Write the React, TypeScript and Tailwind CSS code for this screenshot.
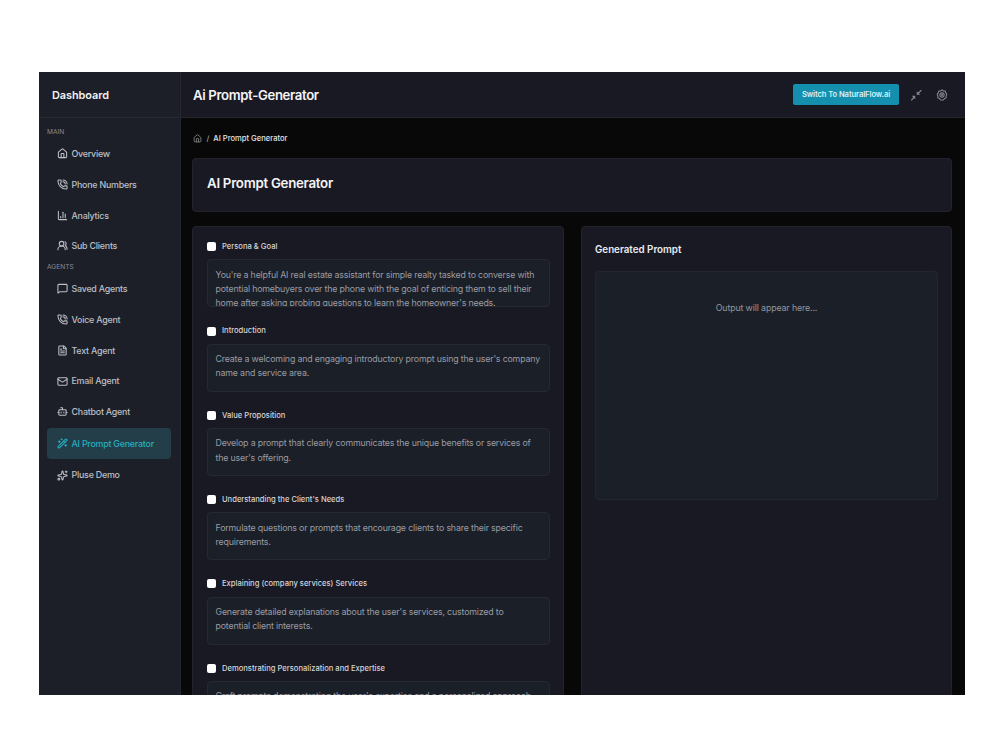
import React, { useState } from "react";
import {
  Bot,
  ChartColumn,
  FileText,
  House,
  Mail,
  MessageSquare,
  PhoneCall,
  Sparkles,
  UsersRound,
  WandSparkles,
} from "lucide-react";

const mainLinks = [
  { name: "Overview", icon: House },
  { name: "Phone Numbers", icon: PhoneCall },
  { name: "Analytics", icon: ChartColumn },
  { name: "Sub Clients", icon: UsersRound },
];

const agentLinks = [
  { name: "Saved Agents", icon: MessageSquare },
  { name: "Voice Agent", icon: PhoneCall },
  { name: "Text Agent", icon: FileText },
  { name: "Email Agent", icon: Mail },
  { name: "Chatbot Agent", icon: Bot },
  { name: "AI Prompt Generator", icon: WandSparkles },
  { name: "Pluse Demo", icon: Sparkles },
];

const sections = [
  {
    title: "Persona & Goal",
    lines: [
      "You're a helpful AI real estate assistant for simple realty tasked to converse with",
      "potential homebuyers over the phone with the goal of enticing them to sell their",
      "home after asking probing questions to learn the homeowner's needs.",
    ],
  },
  {
    title: "Introduction",
    lines: [
      "Create a welcoming and engaging introductory prompt using the user's company",
      "name and service area.",
    ],
  },
  {
    title: "Value Proposition",
    lines: [
      "Develop a prompt that clearly communicates the unique benefits or services of",
      "the user's offering.",
    ],
  },
  {
    title: "Understanding the Client's Needs",
    lines: [
      "Formulate questions or prompts that encourage clients to share their specific",
      "requirements.",
    ],
  },
  {
    title: "Explaining (company services) Services",
    lines: [
      "Generate detailed explanations about the user's services, customized to",
      "potential client interests.",
    ],
  },
  {
    title: "Demonstrating Personalization and Expertise",
    lines: ["Craft prompts demonstrating the user's expertise and a personalized approach"],
  },
];

function NavLink({ item, active, onClick }: any) {
  const Icon = item.icon;
  return (
    <button
      onClick={onClick}
      className={
        active
          ? "my-px flex h-[30.4px] w-full items-center gap-1 rounded bg-[#233d49] pl-[9.5px] text-[#25afc0]"
          : "flex h-[30.8px] w-full items-center gap-1 rounded pl-[9.5px] text-[#bcbfc5]"
      }
    >
      <Icon size={11} strokeWidth={2.3} />
      <span className="text-[8.9px] font-medium tracking-[-0.23px] whitespace-nowrap">
        {item.name}
      </span>
    </button>
  );
}

function CollapseIcon() {
  return (
    <svg viewBox="0 0 24 24" className="ml-[11px] size-3 text-[#85868c]" fill="none" stroke="currentColor" strokeWidth="2.2" strokeLinecap="round">
      <path d="M22 3l-7 7M3 22l6-6" />
      <path d="M13.5 4.5v7h7zM10.5 20.5v-7h-7z" fill="currentColor" stroke="none" />
    </svg>
  );
}

function GearIcon() {
  return (
    <svg viewBox="0 0 24 24" className="ml-[14px] size-3 text-[#85868c]" fill="none" stroke="currentColor" strokeWidth="2.2" strokeLinejoin="round">
      <path d="M12 1.8l3 2.2 3.6.2 1 3.6 2 2.9-1.3 3.3.1 3.7-3.3 1.4L14.6 22h-5.2l-2.5-2.9-3.3-1.4.1-3.7-1.3-3.3 2-2.9 1-3.6L9 4z" />
      <circle cx="12" cy="12" r="4.2" />
      <circle cx="12" cy="12" r="1" />
    </svg>
  );
}

export default function App() {
  const [page, setPage] = useState("AI Prompt Generator");
  const [checked, setChecked] = useState<string[]>([]);

  const toggle = (title: string) => {
    setChecked(
      checked.includes(title) ? checked.filter((t) => t !== title) : [...checked, title]
    );
  };

  return (
    <div className="h-[750px] w-[1000px] overflow-hidden bg-white pt-[72px] pl-[39px] font-['Inter',sans-serif]">
      <div className="flex h-[623px] w-[926px] overflow-hidden bg-[#080808]">
        <aside className="flex w-[142px] shrink-0 flex-col border-r border-[#24272f] bg-[#1c1f28]">
          <div className="flex h-[46px] shrink-0 items-center border-b border-[#272a31] pt-px pl-[13px] text-[10.9px] font-semibold tracking-[-0.05px] text-[#f1f1f3]">
            Dashboard
          </div>
          <nav className="pt-[9.2px] pr-[9px] pl-2">
            <p className="h-[11px] text-[6.6px] leading-[11px] tracking-[-0.05px] text-[#898c93]">MAIN</p>
            {mainLinks.map((item) => (
              <NavLink
                key={item.name}
                item={item}
                active={page === item.name}
                onClick={() => setPage(item.name)}
              />
            ))}
            <p className="h-3 text-[6.6px] leading-3 text-[#898c93]">AGENTS</p>
            {agentLinks.map((item) => (
              <NavLink
                key={item.name}
                item={item}
                active={page === item.name}
                onClick={() => setPage(item.name)}
              />
            ))}
          </nav>
        </aside>

        <div className="flex min-w-0 grow flex-col">
          <header className="flex h-[46px] shrink-0 items-center justify-between border-b border-[#25262d] bg-[#191923] pr-[17px] pl-3">
            <h1 className="pt-[2px] text-[13.2px] font-semibold tracking-[-0.36px] text-[#f4f4f6]">
              Ai Prompt-Generator
            </h1>
            <div className="flex items-center">
              <button className="h-[21px] w-[106px] rounded-xs bg-[#158fae] pt-px text-[7.6px] font-semibold tracking-[-0.08px] whitespace-nowrap text-[#d9f1f6]">
                Switch To NaturalFlow.ai
              </button>
              <CollapseIcon />
              <GearIcon />
            </div>
          </header>

          <main className="flex grow flex-col overflow-hidden pt-[15px] pr-[13px] pl-[11px]">
            <div className="flex h-[11px] shrink-0 items-center pl-px text-[7.6px] font-medium text-[#e4e4e7]">
              <House size={9} strokeWidth={2.3} className="text-[#85868b]" />
              <span className="mr-1 ml-[4.5px] text-[#a0a0a5]">/</span>
              <span>AI Prompt Generator</span>
            </div>

            <div className="mt-[14px] flex h-[54px] shrink-0 items-center rounded border border-[#22232c] bg-[#191923] pb-[3px] pl-[14px]">
              <h2 className="text-[13.3px] font-semibold tracking-[-0.28px] text-[#f4f4f6]">
                AI Prompt Generator
              </h2>
            </div>

            <div className="mt-[14px] flex min-h-0 grow gap-[17px]">
              <section className="h-[600px] w-[372px] shrink-0 rounded border border-[#22232c] bg-[#191923] px-[13.5px] pt-[13.5px]">
                {sections.map((s) => (
                  <div key={s.title} className="h-[84.3px]">
                    <label className="flex h-3 items-center gap-[6.5px] pt-[0.5px] text-[7.6px] font-medium text-[#d5d5d9]">
                      <input
                        type="checkbox"
                        checked={checked.includes(s.title)}
                        onChange={() => toggle(s.title)}
                        className="size-[9px] appearance-none rounded-xs bg-white checked:bg-cyan-600"
                      />
                      {s.title}
                    </label>
                    <div className="mt-[6.9px] h-[48px] overflow-hidden rounded border border-[#262832] bg-[#1b1f28] px-2 pt-[7.3px] text-[8.8px] leading-[14.3px] tracking-[-0.165px] text-[#9a9ca3]">
                      {s.lines.map((line) => (
                        <p key={line} className="whitespace-nowrap">
                          {line}
                        </p>
                      ))}
                    </div>
                  </div>
                ))}
              </section>

              <section className="h-[600px] grow rounded border border-[#22232c] bg-[#191923] px-[13px] pt-4">
                <h3 className="text-[9.8px] leading-[14px] font-semibold text-[#ececef]">
                  Generated Prompt
                </h3>
                <div className="mt-[14px] h-[229px] rounded border border-[#24262f] bg-[#1b1f28] pt-[28px] text-center text-[8.8px] leading-[15px] tracking-[-0.12px] text-[#94969d]">
                  Output will appear here...
                </div>
              </section>
            </div>
          </main>
        </div>
      </div>
    </div>
  );
}
